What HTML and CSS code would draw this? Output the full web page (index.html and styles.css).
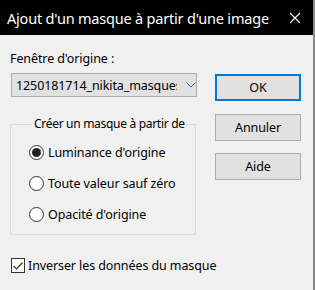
FILE: index.html
```html
<!DOCTYPE html>
<html lang="fr">
<head>
  <meta charset="UTF-8">
  <title>Ajout d'un masque à partir d'une image</title>
  <link rel="stylesheet" href="styles.css">
</head>
<body>
  <div id="window">
    <div id="titlebar">
      <span class="title">Ajout d'un masque à partir d'une image</span>
      <svg class="close" width="12" height="12" viewBox="0 0 12 12">
        <path d="M1 1 L11 11 M11 1 L1 11" stroke="#fff" stroke-width="1.1" fill="none"/>
      </svg>
    </div>

    <div id="content">
      <div class="left">
        <div class="label">Fenêtre d'origine :</div>
        <div class="combo">
          <span class="combo-text">1250181714_nikita_masques</span>
          <svg class="chevron" width="10" height="6" viewBox="0 0 10 6">
            <path d="M0.5 0.5 L5 5 L9.5 0.5" stroke="#555" stroke-width="1" fill="none"/>
          </svg>
        </div>

        <fieldset class="group">
          <legend>Créer un masque à partir de</legend>
          <div class="radio"><span class="dot on"></span>Luminance d'origine</div>
          <div class="radio"><span class="dot"></span>Toute valeur sauf zéro</div>
          <div class="radio"><span class="dot"></span>Opacité d'origine</div>
        </fieldset>

        <div class="check">
          <span class="box">
            <svg width="12" height="12" viewBox="0 0 12 12">
              <path d="M1.5 6 L4.5 9 L10.5 2.5" stroke="#333" stroke-width="1.2" fill="none"/>
            </svg>
          </span>
          Inverser les données du masque
        </div>
      </div>

      <div class="right">
        <div class="btn default">OK</div>
        <div class="btn">Annuler</div>
        <div class="btn">Aide</div>
      </div>
    </div>
  </div>
</body>
</html>
```

FILE: styles.css
```css
body{
  margin: 0;
  padding: 0;
  background: #f0f0f0;
  font-family: "Noto Sans", "Open Sans", sans-serif;
  color: #000;
}

#window{
  width: 313px;
  height: 290px;
  border-right: 2px solid #8a8a8a;
  background: #f0f0f0;
}

#titlebar{
  height: 35px;
  background: #000;
  display: flex;
  align-items: center;
  justify-content: space-between;
  padding: 0 12px 0 7px;
}
#titlebar .title{
  color: #fff;
  font-size: 14.5px;
  letter-spacing: -0.2px;
}
#titlebar .close{
  margin-top: 1px;
}

#content{
  display: flex;
  padding-left: 10px;
  font-size: 12.5px;
  letter-spacing: -0.1px;
  white-space: nowrap;
}

.left{
  width: 187px;
}
.label{
  margin: 15px 0 0 0;
  height: 18px;
  line-height: 18px;
}
.combo{
  margin: 5px 0 0 1px;
  height: 22px;
  border: 1px solid #adadad;
  background: #e1e1e1;
  display: flex;
  align-items: center;
  padding-left: 4px;
}
.combo-text{
  width: 162px;
  overflow: hidden;
  white-space: nowrap;
}
.chevron{
  margin-left: 9px;
}

.group{
  margin: 19px 0 0 0;
  padding: 0 0 4px 18px;
  border: 1px solid #dcdcdc;
  width: 186px;
  min-width: 0;
  box-sizing: border-box;
}
.group legend{
  padding: 0 2px;
  margin-left: 3px;
  line-height: 16px;
  font-size: 12px;
  letter-spacing: -0.3px;
  white-space: nowrap;
}
.radio{
  display: flex;
  align-items: center;
  height: 31px;
}
.radio:first-of-type{
  margin-top: 5px;
}
.dot{
  width: 13px;
  height: 13px;
  border: 1px solid #333;
  border-radius: 50%;
  background: #fff;
  margin-right: 4px;
  display: flex;
  align-items: center;
  justify-content: center;
}
.dot.on::after{
  content: "";
  width: 9px;
  height: 9px;
  border-radius: 50%;
  background: #222;
}

.check{
  display: flex;
  align-items: center;
  margin: 22px 0 0 1px;
}
.box{
  width: 13px;
  height: 13px;
  border: 1px solid #333;
  background: #fff;
  margin-right: 3px;
  display: flex;
  align-items: center;
  justify-content: center;
}

.right{
  margin-left: 18px;
  padding-top: 39px;
  display: flex;
  flex-direction: column;
  gap: 12px;
}
.btn{
  width: 84px;
  height: 25px;
  border: 1px solid #adadad;
  background: #e1e1e1;
  display: flex;
  align-items: center;
  justify-content: center;
}
.btn.default{
  width: 82px;
  height: 23px;
  border: 2px solid #0078d7;
  margin-bottom: 1px;
}
```
